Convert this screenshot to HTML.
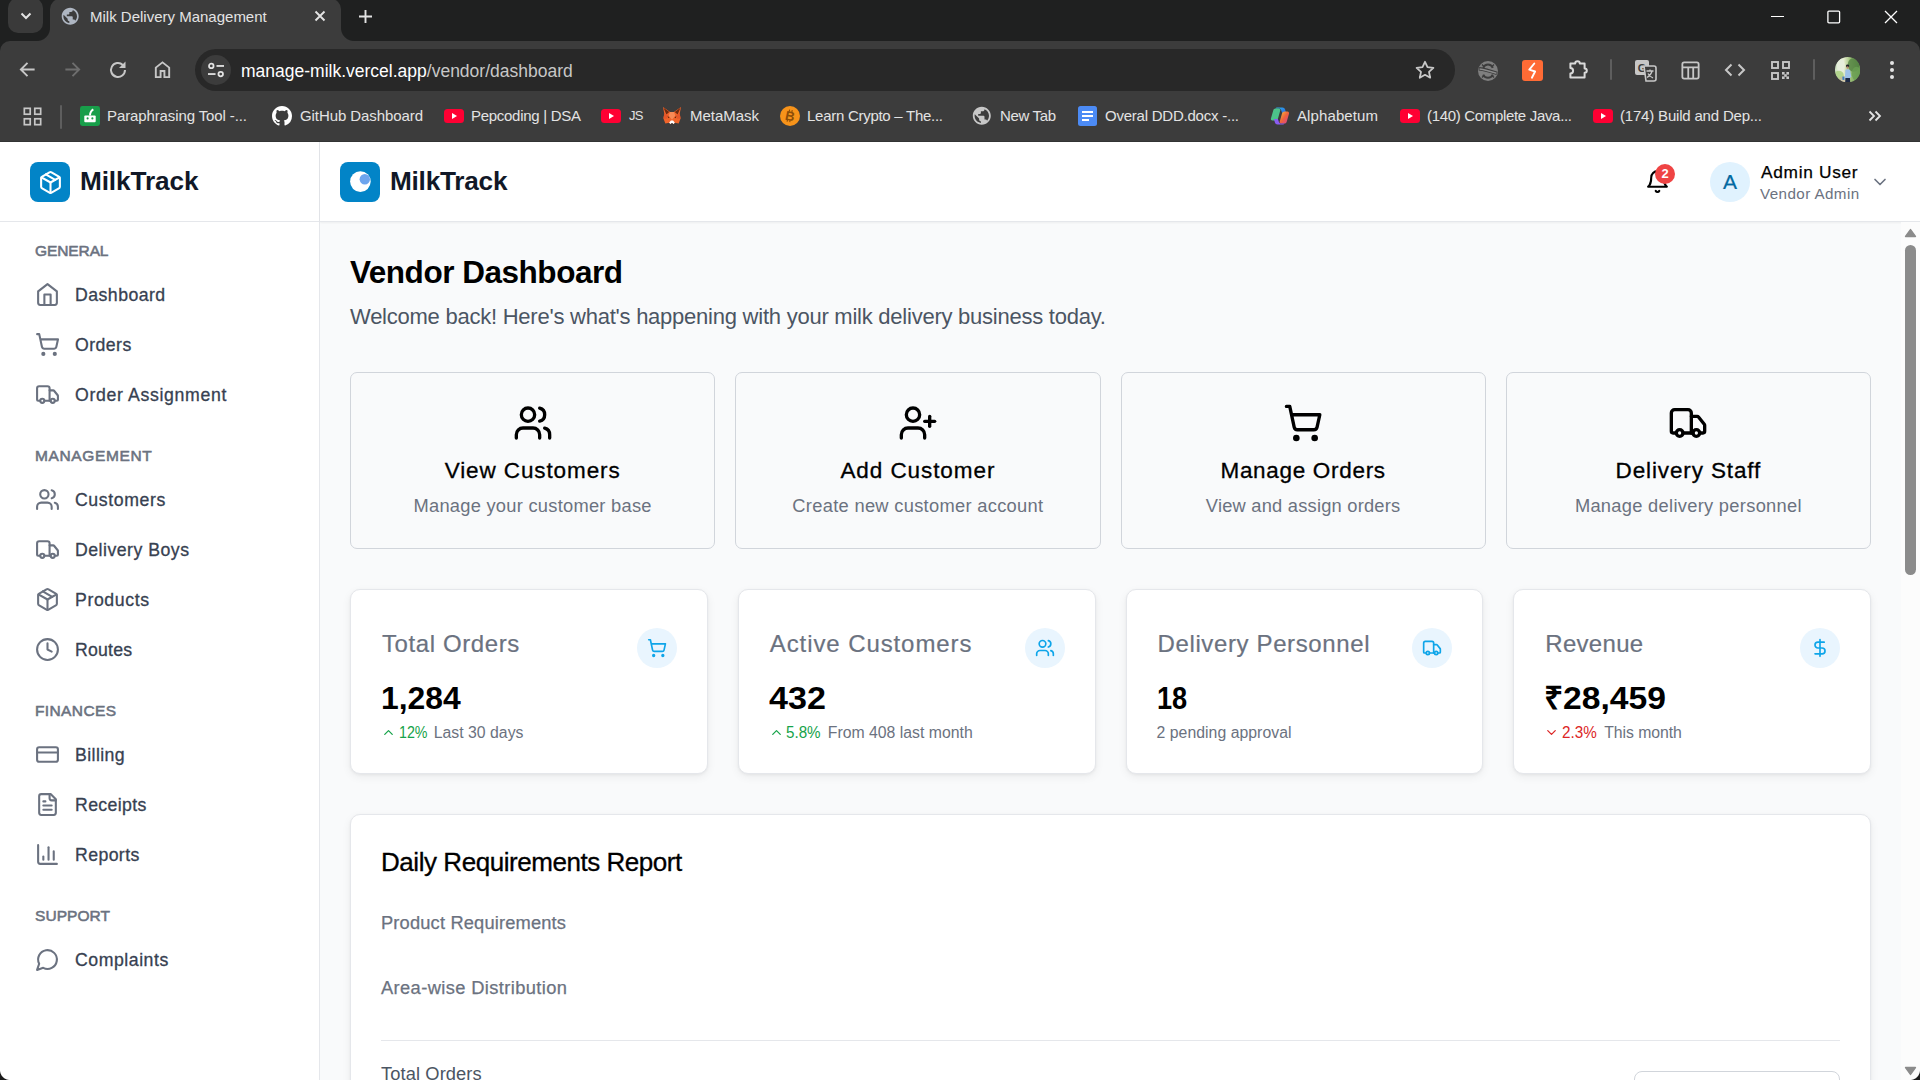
<!DOCTYPE html>
<html lang="en">
<head>
<meta charset="utf-8">
<title>Milk Delivery Management</title>
<style>
*{box-sizing:border-box;margin:0;padding:0}
html,body{width:1920px;height:1080px;overflow:hidden}
body{position:relative;background:#f9fafb;font-family:"Liberation Sans",sans-serif;color:#000}
svg{display:block}
.abs{position:absolute}
/* ---------- browser chrome ---------- */
#chrome{position:absolute;left:0;top:0;width:1920px;height:142px;background:#1f2020;color:#e3e3e3;font-size:15px}
#tabstrip{position:absolute;left:0;top:0;width:1920px;height:41px;background:#1f2020}
#tabsearch{position:absolute;left:8px;top:-2px;width:35px;height:35px;border-radius:10px;background:#3a3a3a}
#tab{position:absolute;left:50px;top:-1px;width:291px;height:42px;background:#3c3c3c;border-radius:10px 10px 0 0}
#tab:before,#tab:after{content:"";position:absolute;bottom:0;width:13px;height:13px;background:radial-gradient(circle at 0 0,transparent 12.5px,#3c3c3c 13.5px)}
#tab:before{left:-13px}
#tab:after{right:-13px;background:radial-gradient(circle at 100% 0,transparent 12.5px,#3c3c3c 13.5px)}
.ct{position:absolute;white-space:nowrap;line-height:20px;height:20px}
#toolbar{position:absolute;left:0;top:41px;width:1920px;height:55px;background:#3c3c3c;border-radius:10px 10px 0 0}
#omni{position:absolute;left:195px;top:8px;width:1260px;height:42px;border-radius:21px;background:#282828}
#siteinfo{position:absolute;left:6px;top:6px;width:30px;height:30px;border-radius:15px;background:#3c3c3c}
#bm{position:absolute;left:0;top:96px;width:1920px;height:46px;background:#3c3c3c;border-bottom:1px solid #323333}
.bmt{position:absolute;top:10px;line-height:20px;height:20px;white-space:nowrap;color:#e3e3e3;font-size:15px}
.ico{position:absolute}
/* ---------- app ---------- */
#app{position:absolute;left:0;top:142px;width:1920px;height:938px;background:#f9fafb;overflow:hidden}
#sidebar{position:absolute;left:0;top:0;width:320px;height:938px;background:#fff;border-right:1px solid #e5e7eb}
#sbhead{position:absolute;left:0;top:0;width:319px;height:80px;border-bottom:1px solid #e5e7eb}
.logo{position:absolute;width:40px;height:40px;border-radius:8px;background:#0284c7}
.brand{position:absolute;font-weight:700;font-size:26.200px;line-height:35px;color:#111827;white-space:nowrap}
.grp{position:absolute;left:35px;margin-top:-1px;font-size:15.500px;line-height:20px;font-weight:400;color:#6b7280;-webkit-text-stroke:.55px #6b7280;white-space:nowrap}
.nav{position:absolute;left:20px;width:280px;height:45px;color:#374151;font-size:17.700px;line-height:25px}
.nav svg{position:absolute;left:15px;top:10px;width:25px;height:25px;stroke:#6b7280;fill:none;stroke-width:2;stroke-linecap:round;stroke-linejoin:round}
.nav span{position:absolute;left:55px;top:11px;white-space:nowrap;-webkit-text-stroke:.3px #374151}
#header{position:absolute;left:320px;top:0;width:1600px;height:80px;background:#fff;border-bottom:1px solid #e5e7eb;box-shadow:0 1px 2px rgba(0,0,0,.05)}
#main{position:absolute;left:320px;top:80px;width:1581px;height:858px}
h1{position:absolute;left:30px;top:30px;font-size:31.500px;line-height:40px;font-weight:700;color:#000;white-space:nowrap}
.sub{position:absolute;left:30px;top:80px;font-size:22px;line-height:30px;color:#4b5563;white-space:nowrap}
.qa{position:absolute;top:150px;width:365.250px;height:177px;border:1px solid #d1d5db;border-radius:7px;text-align:center}
.qa svg{position:absolute;left:50%;margin-left:-20px;top:30px;width:40px;height:40px;stroke:#000;fill:none;stroke-width:2;stroke-linecap:round;stroke-linejoin:round}
.qa b{position:absolute;left:0;right:0;top:80px;font-weight:400;font-size:22.500px;line-height:35px;color:#000;-webkit-text-stroke:.3px #000}
.qa p{position:absolute;left:0;right:0;top:120px;font-size:18.300px;line-height:25px;color:#6b7280}
.st{position:absolute;top:367px;width:357.750px;height:185px;background:#fff;border:1px solid #e5e7eb;border-radius:10px;box-shadow:0 3px 10px rgba(0,0,0,.06),0 1px 3px rgba(0,0,0,.05)}
.st .tt{position:absolute;left:31px;top:36px;font-size:24px;line-height:35px;color:#6b7280;white-space:nowrap;-webkit-text-stroke:.2px #6b7280}
.st .ci{position:absolute;right:30px;top:38px;width:40px;height:40px;border-radius:20px;background:#e9f5fe}
.st .ci svg{position:absolute;left:10px;top:10px;width:20px;height:20px;stroke:#0ea5e9;fill:none;stroke-width:2;stroke-linecap:round;stroke-linejoin:round}
.st .v{position:absolute;left:30px;top:88px;font-size:32px;line-height:40px;font-weight:700;color:#000;white-space:nowrap}
.st .d{position:absolute;left:30px;top:133px;height:20px;font-size:15.800px;line-height:20px;color:#6b7280;white-space:nowrap}
.st .d span{position:absolute;top:0;white-space:nowrap}
.st .d .ch{position:absolute;left:0;top:2px;width:15px;height:15px;fill:none;stroke-width:2;stroke-linecap:round;stroke-linejoin:round}
.up{color:#16a34a}.dn{color:#dc2626}
#rep{position:absolute;left:30px;top:592px;width:1521px;height:400px;background:#fff;border:1px solid #e5e7eb;border-radius:10px;box-shadow:0 3px 10px rgba(0,0,0,.06),0 1px 3px rgba(0,0,0,.05)}

.badge{position:absolute;left:1335px;top:22px;width:20px;height:20px;border-radius:10px;background:#ef4444;color:#fff;font-size:13px;font-weight:700;line-height:20px;text-align:center}
.avatar{position:absolute;left:1390px;top:20px;width:40px;height:40px;border-radius:20px;background:#e0f2fe;color:#0369a1;font-size:21px;line-height:40px;text-align:center;-webkit-text-stroke:.2px #0369a1}
.uname{position:absolute;left:1441px;top:18px;font-size:17.300px;line-height:25px;color:#000;white-space:nowrap;-webkit-text-stroke:.25px #000}
.urole{position:absolute;left:1440px;top:42px;font-size:15.200px;line-height:20px;color:#6b7280;white-space:nowrap}
.rt{position:absolute;left:30px;top:30px;font-size:26px;line-height:35px;color:#000;white-space:nowrap;-webkit-text-stroke:.3px #000}
.rs{position:absolute;left:30px;font-size:18.300px;line-height:25px;color:#6b7280;white-space:nowrap;-webkit-text-stroke:.25px #6b7280}
.rl{position:absolute;left:30px;top:225px;width:1459px;height:1px;background:#e5e7eb}
.rto{position:absolute;left:30px;top:246px;font-size:18.300px;line-height:25px;color:#4b5563;white-space:nowrap}
.rbtn{position:absolute;left:1283px;top:256px;width:206px;height:45px;border:1px solid #d1d5db;border-radius:8px;background:#fff}
#sbar{position:absolute;left:1901px;top:80px;width:19px;height:858px;background:#fcfcfc}
#thumb{position:absolute;left:4px;top:23px;width:11px;height:330px;border-radius:6px;background:#8b8b8b}
.corner{position:absolute;width:10px;height:10px}
</style>
</head>
<body>
<div id="chrome">
  <div id="tabstrip">
    <div id="tabsearch"><svg class="ico" style="left:11.500px;top:14px" width="12" height="8" viewBox="0 0 12 8"><path d="M1.5 1.5 6 6l4.5-4.5" fill="none" stroke="#e3e3e3" stroke-width="2"/></svg></div>
    <div id="tab">
      <svg class="ico" style="left:10px;top:6.800px" width="20.400" height="20.400" viewBox="0 0 24 24"><path d="M12 2C6.480 2 2 6.480 2 12s4.480 10 10 10 10-4.480 10-10S17.520 2 12 2zm-1 17.930c-3.950-.490-7-3.850-7-7.930 0-.620.080-1.210.210-1.790L9 15v1c0 1.100.900 2 2 2v1.930zm6.900-2.540c-.260-.810-1-1.390-1.900-1.390h-1v-3c0-.550-.450-1-1-1H8v-2h2c.550 0 1-.450 1-1V7h2c1.100 0 2-.900 2-2v-.410c2.930 1.190 5 4.060 5 7.410 0 2.080-.800 3.970-2.100 5.390z" fill="#aeb6c2"/></svg>
      <span class="ct" style="left:40px;top:8px;color:#e3e3e3">Milk Delivery Management</span>
      <svg class="ico" style="left:264px;top:11px" width="12" height="12" viewBox="0 0 12 12"><path d="M1.500 1.500l9 9m0-9l-9 9" stroke="#e3e3e3" stroke-width="1.900" fill="none"/></svg>
    </div>
    <svg class="ico" style="left:358px;top:8.500px" width="15" height="15" viewBox="0 0 15 15"><path d="M7.500 1v13M1 7.500h13" stroke="#e3e3e3" stroke-width="1.900" fill="none"/></svg>
    <div class="abs" style="left:1771px;top:16px;width:13px;height:1px;background:#fff"></div>
    <svg class="ico" style="left:1826px;top:9px" width="16" height="16" viewBox="0 0 16 16"><rect x="1.900" y="2.100" width="11.700" height="11.700" rx="1" fill="none" stroke="#fff" stroke-width="1.300"/></svg>
    <svg class="ico" style="left:1883px;top:9px" width="16" height="16" viewBox="0 0 16 16"><path d="M2 2l12 12m0-12l-12 12" stroke="#fff" stroke-width="1.300" fill="none"/></svg>
  </div>
  <div id="toolbar">
    <!-- back -->
    <svg class="ico" style="left:18px;top:19px" width="19" height="19" viewBox="0 0 20 20"><path d="M17.500 10H3.500M10 3l-7 7 7 7" fill="none" stroke="#c7c7c7" stroke-width="2"/></svg>
    <!-- forward -->
    <svg class="ico" style="left:63px;top:19px" width="19" height="19" viewBox="0 0 20 20"><path d="M2.500 10h14M10 3l7 7-7 7" fill="none" stroke="#6e6e6e" stroke-width="2"/></svg>
    <!-- reload -->
    <svg class="ico" style="left:107px;top:18px" width="22" height="22" viewBox="0 0 22 22"><path d="M18 11a7 7 0 1 1-2.200-5.100" fill="none" stroke="#c7c7c7" stroke-width="2"/><path d="M18.500 2.500v6.500h-6.500z" fill="#c7c7c7"/></svg>
    <!-- home -->
    <svg class="ico" style="left:152px;top:18px" width="21" height="21" viewBox="0 0 22 22"><path d="M4 19V9l7-5.500L18 9v10h-5v-6.500H9V19z" fill="none" stroke="#c7c7c7" stroke-width="2"/></svg>
    <div id="omni">
      <div id="siteinfo"><svg class="ico" style="left:6px;top:7px" width="18" height="16" viewBox="0 0 19 17"><g fill="none" stroke="#e3e3e3" stroke-width="1.900"><circle cx="4.500" cy="4.200" r="2.400"/><path d="M10 4.200h8"/><circle cx="14.500" cy="12.800" r="2.400"/><path d="M1 12.800h8"/></g></svg></div>
      <span class="ct" style="left:46px;top:11px;font-size:17.500px;line-height:22px;color:#fff" id="url"><span>manage-milk.vercel.app</span><span style="color:#c7c7c7">/vendor/dashboard</span></span>
      <svg class="ico" style="left:1219px;top:10px" width="22" height="22" viewBox="0 0 22 22"><path d="M11 2.800l2.500 5.400 5.900.7-4.400 4 1.200 5.800L11 15.800l-5.200 2.900L7 12.900l-4.400-4 5.900-.7z" fill="none" stroke="#c7c7c7" stroke-width="1.800" stroke-linejoin="round"/></svg>
    </div>
    <svg class="ico" style="left:1476.500px;top:18.500px" width="22" height="22" viewBox="0 0 22 22"><circle cx="11" cy="11" r="10" fill="#7f7f7f"/><path d="M6.200 7.800a5.200 5.200 0 0 1 9.600 0M6.200 14.600a5.200 5.200 0 0 0 9.600 0" fill="none" stroke="#3c3c3c" stroke-width="2"/><path d="M5 4.500l2 2M17 4.500l-2 2M5 17.500l2-2M17 17.500l-2-2" stroke="#3c3c3c" stroke-width="1.300"/><path d="M2 8.800c5 .6 12 2.600 18 4.600" fill="none" stroke="#3c3c3c" stroke-width="3.600"/><path d="M2.500 8.900c5 .6 11.500 2.500 17 4.300" fill="none" stroke="#8a8a8a" stroke-width="1.500"/></svg>
    <svg class="ico" style="left:1522px;top:19px" width="21" height="21" viewBox="0 0 21 21"><rect width="21" height="21" rx="3" fill="#ff6b35"/><path d="M12.300 3.500l-5 6.200 5.800 1.800-3.200 6.200" fill="none" stroke="#fff" stroke-width="1.900" stroke-linejoin="round" stroke-linecap="round"/></svg>
    <svg class="ico" style="left:1567px;top:17px" width="22" height="22" viewBox="0 0 22 22"><path d="M3.400 5.500H8.200A2.300 2.300 0 0 1 12.800 5.500H17.600V10.400A2.200 2.200 0 0 1 17.600 14.800V19.400H3.400V15.400A2.700 2.700 0 0 0 3.400 10Z" fill="none" stroke="#dadada" stroke-width="2" stroke-linejoin="round"/></svg>
    <div class="abs" style="left:1610px;top:18px;width:2px;height:21px;background:#5e5e5e;border-radius:1px"></div>
    <svg class="ico" style="left:1634px;top:18px" width="23" height="23" viewBox="0 0 23 23"><rect x="1" y="1" width="14" height="15" rx="2" fill="#c7c7c7"/><text x="8" y="12.500" font-family="Liberation Sans,sans-serif" font-size="11" font-weight="700" fill="#3c3c3c" text-anchor="middle">G</text><path d="M10 7h10a2 2 0 0 1 2 2v11a2 2 0 0 1-2 2h-8z" fill="#3c3c3c" stroke="#c7c7c7" stroke-width="1.600"/><path d="M12.500 12h7M16 10.500v1.500M18 12c-.5 2.500-2.500 5-5 6.500M14 14.500c1 2 3 3.500 5 4.500" fill="none" stroke="#c7c7c7" stroke-width="1.300"/></svg>
    <svg class="ico" style="left:1681px;top:20px" width="19" height="19" viewBox="0 0 21 21"><rect x="1.500" y="1.500" width="18" height="18" rx="2" fill="none" stroke="#c7c7c7" stroke-width="2"/><path d="M1.500 7h18M8 7v12.500M13.500 7v12.500" fill="none" stroke="#c7c7c7" stroke-width="2"/></svg>
    <svg class="ico" style="left:1724px;top:22px" width="22" height="14" viewBox="0 0 22 14"><path d="M7.500 1.500L2 7l5.500 5.500M14.500 1.500L20 7l-5.500 5.500" fill="none" stroke="#c7c7c7" stroke-width="2"/></svg>
    <svg class="ico" style="left:1771px;top:20px" width="19" height="19" viewBox="0 0 19 19"><g fill="none" stroke="#c7c7c7" stroke-width="1.900"><rect x="1" y="1" width="6" height="6"/><rect x="12" y="1" width="6" height="6"/><rect x="1" y="12" width="6" height="6"/></g><g fill="#c7c7c7"><rect x="11" y="11" width="2.600" height="2.600"/><rect x="15.400" y="11" width="2.600" height="2.600"/><rect x="13.200" y="13.200" width="2.600" height="2.600"/><rect x="11" y="15.400" width="2.600" height="2.600"/><rect x="15.400" y="15.400" width="2.600" height="2.600"/></g></svg>
    <div class="abs" style="left:1813px;top:18px;width:2px;height:21px;background:#5e5e5e;border-radius:1px"></div>
    <svg class="ico" style="left:1835px;top:16px" width="25.400" height="25.400" viewBox="0 0 26 26"><defs><clipPath id="avc"><circle cx="13" cy="13" r="13"/></clipPath><linearGradient id="avg" x1="0" y1="0" x2="1" y2="0"><stop offset="0" stop-color="#cfe3c4"/><stop offset=".35" stop-color="#e6edcf"/><stop offset=".6" stop-color="#9fc17a"/><stop offset="1" stop-color="#5f8f4a"/></linearGradient></defs><g clip-path="url(#avc)"><rect width="26" height="26" fill="url(#avg)"/><ellipse cx="19" cy="8" rx="6" ry="7" fill="#4f7f3f" opacity=".75"/><ellipse cx="22" cy="17" rx="5" ry="7" fill="#6aa052" opacity=".8"/><ellipse cx="6" cy="9" rx="4" ry="8" fill="#e9efe0" opacity=".8"/><ellipse cx="4" cy="19" rx="5" ry="5" fill="#a9cf7e" opacity=".8"/><ellipse cx="9" cy="23" rx="5" ry="3" fill="#c9b89a" opacity=".7"/><rect x="7.600" y="20" width="2" height="3.500" fill="#3f7fc2"/><ellipse cx="12.900" cy="9.300" rx="1.700" ry="1.500" fill="#23232b"/><ellipse cx="12.900" cy="10.700" rx="1.100" ry="1.300" fill="#b98a6a"/><path d="M10.600 13.200q2.300-1.400 4.800 0l1.300 7.300-1.200.6-.2 1.400h-5.200z" fill="#9dc1ea"/><path d="M10.700 21.600h4.600l.3 4.400h-5.200z" fill="#1d2a45"/></g></svg>
    <svg class="ico" style="left:1889px;top:17px" width="6" height="24" viewBox="0 0 6 24"><g fill="#e3e3e3"><circle cx="3" cy="5" r="2"/><circle cx="3" cy="12" r="2"/><circle cx="3" cy="19" r="2"/></g></svg>
  </div>
  <div id="bm">
    <svg class="ico" style="left:22.500px;top:11px" width="19" height="19" viewBox="0 0 20 20"><g fill="none" stroke="#c7c7c7" stroke-width="1.800"><rect x="1.400" y="1.400" width="6.200" height="6.200"/><rect x="12.400" y="1.400" width="6.200" height="6.200"/><rect x="1.400" y="12.400" width="6.200" height="6.200"/><rect x="12.400" y="12.400" width="6.200" height="6.200"/></g></svg>
    <div class="abs" style="left:60px;top:9px;width:2px;height:24px;background:#5e5e5e;border-radius:1px"></div>
    <svg class="ico" style="left:80px;top:10px" width="20" height="20" viewBox="0 0 21 21"><rect width="21" height="21" rx="2.500" fill="#189e4a"/><rect x="4.500" y="10" width="12" height="7" rx="1" fill="#fff"/><circle cx="8" cy="13" r="1.100" fill="#189e4a"/><circle cx="13" cy="13" r="1.100" fill="#189e4a"/><path d="M10.500 10c0-3 1-5 3.500-6.500" fill="none" stroke="#fff" stroke-width="2"/></svg>
    <span class="bmt" style="letter-spacing:-0.11px;left:107px">Paraphrasing Tool -...</span>
    <svg class="ico" style="left:272px;top:10px" width="20" height="20" viewBox="0 0 16 16"><path fill="#fff" d="M8 0C3.580 0 0 3.580 0 8c0 3.540 2.290 6.530 5.470 7.590.4.070.55-.17.55-.38 0-.19-.01-.82-.01-1.490-2.010.37-2.530-.49-2.690-.94-.09-.23-.48-.94-.82-1.130-.28-.15-.68-.52-.01-.53.630-.01 1.080.58 1.230.82.720 1.210 1.870.87 2.330.66.070-.52.280-.87.510-1.070-1.780-.2-3.640-.89-3.640-3.950 0-.87.310-1.590.82-2.150-.08-.2-.36-1.020.08-2.120 0 0 .67-.21 2.200.82.640-.18 1.320-.27 2-.27s1.360.09 2 .27c1.530-1.040 2.200-.82 2.200-.82.440 1.100.16 1.920.08 2.120.51.560.82 1.270.82 2.150 0 3.070-1.870 3.750-3.650 3.950.290.25.540.73.540 1.480 0 1.070-.01 1.930-.01 2.200 0 .21.150.46.55.38A8.010 8.010 0 0 0 16 8c0-4.420-3.580-8-8-8z"/></svg>
    <span class="bmt" style="letter-spacing:-0.082px;left:300px">GitHub Dashboard</span>
    <svg class="ico" style="left:444px;top:13px" width="20" height="14" viewBox="0 0 20 14"><rect width="20" height="14" rx="3.500" fill="#ff0033"/><path d="M8 4l5 3-5 3z" fill="#fff"/></svg>
    <span class="bmt" style="letter-spacing:-0.283px;left:471px">Pepcoding | DSA</span>
    <svg class="ico" style="left:601px;top:13px" width="20" height="14" viewBox="0 0 20 14"><rect width="20" height="14" rx="3.500" fill="#ff0033"/><path d="M8 4l5 3-5 3z" fill="#fff"/></svg>
    <span class="bmt" style="left:629px;font-size:13px;letter-spacing:-.8px">JS</span>
    <svg class="ico" style="left:662px;top:10px" width="20" height="20" viewBox="0 0 21 20"><path d="M1 .500l7.500 5.300h4L20 .500l-1.400 6.800.9 5.200-2 5.500-4-1-1.500 1.500h-3L7.500 17l-4 1-2-5.500.9-5.200z" fill="#f0642a"/><path d="M1.600 1.300l6 4.600-3 2.600zM19.400 1.300l-6 4.600 3 2.600z" fill="#6e2a10"/><path d="M8.500 5.800h4l1.500 4-3.500 4.200-3.500-4.200z" fill="#f78a56"/><path d="M2.400 7.300l4.600 2.500L5 13l-3.500-.5zM18.600 7.300L14 9.800l2 3.200 3.500-.5z" fill="#e4572a"/><path d="M5.800 10.600l2 .5-.6 1.200zM15.200 10.600l-2 .5.600 1.200z" fill="#3a1a0c"/><path d="M7.500 17l1.800-2.200h2.400l1.800 2.200-1.500 1.500H9z" fill="#fff"/><path d="M9.300 17.600h2.400l-.3 1H9.600z" fill="#3a2a22"/></svg>
    <span class="bmt" style="letter-spacing:-0.027px;left:690px">MetaMask</span>
    <svg class="ico" style="left:780px;top:10px" width="20" height="20" viewBox="0 0 20 20"><circle cx="10" cy="10" r="10" fill="#f7931a"/><text x="10" y="14.500" font-family="Liberation Sans,sans-serif" font-size="13" font-weight="700" fill="#8a4d08" text-anchor="middle" transform="rotate(12 10 10)">B</text><path d="M8.300 3.800v2M11 3.800v2M8.300 14v2M11 14v2" stroke="#8a4d08" stroke-width="1.100" transform="rotate(12 10 10)"/></svg>
    <span class="bmt" style="letter-spacing:-0.273px;left:807px">Learn Crypto – The...</span>
    <svg class="ico" style="left:971.200px;top:9.200px" width="21.600" height="21.600" viewBox="0 0 24 24"><path d="M12 2C6.480 2 2 6.480 2 12s4.480 10 10 10 10-4.480 10-10S17.520 2 12 2zm-1 17.930c-3.950-.490-7-3.850-7-7.930 0-.620.080-1.210.210-1.790L9 15v1c0 1.100.900 2 2 2v1.930zm6.900-2.540c-.260-.810-1-1.390-1.900-1.390h-1v-3c0-.550-.450-1-1-1H8v-2h2c.550 0 1-.450 1-1V7h2c1.100 0 2-.900 2-2v-.410c2.930 1.190 5 4.060 5 7.410 0 2.080-.800 3.970-2.100 5.390z" fill="#c7c7c7"/></svg>
    <span class="bmt" style="letter-spacing:-0.349px;left:1000px">New Tab</span>
    <svg class="ico" style="left:1078px;top:10px" width="19" height="20" viewBox="0 0 19 20"><rect width="19" height="20" rx="2.500" fill="#4c8bf5"/><path d="M4 6h11M4 10h11M4 14h7" stroke="#fff" stroke-width="2"/></svg>
    <span class="bmt" style="letter-spacing:-0.23px;left:1105px">Overal DDD.docx -...</span>
    <svg class="ico" style="left:1270px;top:10px" width="20" height="20" viewBox="0 0 20 20"><defs><linearGradient id="cg1" x1="0" y1="0" x2="1" y2="1"><stop offset="0" stop-color="#2bb4f0"/><stop offset="1" stop-color="#2a64e0"/></linearGradient><linearGradient id="cg2" x1="0" y1="0" x2="1" y2="1"><stop offset="0" stop-color="#f7c33c"/><stop offset=".5" stop-color="#f0623c"/><stop offset="1" stop-color="#d43da0"/></linearGradient></defs><path d="M7 1.500h5.500c1.300 0 2.200.8 2.600 2l1 3.500h-4l-1-3c-.3-.9-1-1.500-2-1.500H5.500c.3-.6.8-1 1.500-1z" fill="url(#cg1)"/><path d="M5.500 2.500h3c1 0 1.600.5 1.900 1.500L8 12.500c-.4 1.300-1.400 2-2.700 2H2.500C1.300 14.500.6 13.500 1 12.200L3.300 4.300c.3-1.100 1.100-1.800 2.200-1.800z" fill="#4cc38a"/><path d="M14.500 17.500h-3c-1 0-1.600-.5-1.900-1.500L12 7.500c.4-1.300 1.400-2 2.700-2h2.800c1.200 0 1.900 1 1.500 2.300l-2.300 7.900c-.3 1.100-1.100 1.800-2.200 1.800z" fill="url(#cg2)"/><path d="M13 18.500H7.500c-1.300 0-2.200-.8-2.600-2l-1-3.500h4l1 3c.3.900 1 1.500 2 1.500h3.600c-.3.600-.8 1-1.500 1z" fill="#8a5cf0"/></svg>
    <span class="bmt" style="letter-spacing:0.104px;left:1297px">Alphabetum</span>
    <svg class="ico" style="left:1400px;top:13px" width="20" height="14" viewBox="0 0 20 14"><rect width="20" height="14" rx="3.500" fill="#ff0033"/><path d="M8 4l5 3-5 3z" fill="#fff"/></svg>
    <span class="bmt" style="letter-spacing:-0.321px;left:1427px">(140) Complete Java...</span>
    <svg class="ico" style="left:1593px;top:13px" width="20" height="14" viewBox="0 0 20 14"><rect width="20" height="14" rx="3.500" fill="#ff0033"/><path d="M8 4l5 3-5 3z" fill="#fff"/></svg>
    <span class="bmt" style="letter-spacing:-0.187px;left:1620px">(174) Build and Dep...</span>
    <svg class="ico" style="left:1868px;top:14px" width="14" height="12" viewBox="0 0 14 12"><path d="M1.500 1.500L6 6l-4.500 4.500M7.500 1.500L12 6l-4.500 4.500" fill="none" stroke="#e3e3e3" stroke-width="1.800"/></svg>
  </div>
</div>
<div id="app">
  <div id="sidebar">
    <div id="sbhead"><div class="logo" style="left:30px;top:20px"><svg viewBox="0 0 24 24" style="position:absolute;left:7.500px;top:7.500px;width:25px;height:25px;stroke:#fff;fill:none;stroke-width:2;stroke-linecap:round;stroke-linejoin:round"><path d="m7.500 4.270 9 5.150"/><path d="M21 8a2 2 0 0 0-1-1.730l-7-4a2 2 0 0 0-2 0l-7 4A2 2 0 0 0 3 8v8a2 2 0 0 0 1 1.730l7 4a2 2 0 0 0 2 0l7-4A2 2 0 0 0 21 16Z"/><path d="m3.300 7 8.700 5 8.700-5"/><path d="M12 22V12"/></svg></div><div class="brand" style="letter-spacing:-0.109px;left:80px;top:22px">MilkTrack</div></div>
    <div class="grp" style="letter-spacing:-0.099px;top:99.5px">GENERAL</div>
    <div class="nav" style="top:130px"><svg viewBox="0 0 24 24"><path d="m3 9 9-7 9 7v11a2 2 0 0 1-2 2H5a2 2 0 0 1-2-2z"/><polyline points="9 22 9 12 15 12 15 22"/></svg><span style="letter-spacing:0.459px">Dashboard</span></div>
    <div class="nav" style="top:180px"><svg viewBox="0 0 24 24"><circle cx="8" cy="21" r="1"/><circle cx="19" cy="21" r="1"/><path d="M2.050 2.050h2l2.660 12.420a2 2 0 0 0 2 1.580h9.780a2 2 0 0 0 1.950-1.570l1.650-7.430H5.120"/></svg><span style="letter-spacing:0.447px">Orders</span></div>
    <div class="nav" style="top:230px"><svg viewBox="0 0 24 24"><path d="M14 18V6a2 2 0 0 0-2-2H4a2 2 0 0 0-2 2v11a1 1 0 0 0 1 1h2"/><path d="M15 18H9"/><path d="M19 18h2a1 1 0 0 0 1-1v-3.650a1 1 0 0 0-.220-.624l-3.480-4.350A1 1 0 0 0 17.520 8H14"/><circle cx="17" cy="18" r="2"/><circle cx="7" cy="18" r="2"/></svg><span style="letter-spacing:0.649px">Order Assignment</span></div>
    <div class="grp" style="letter-spacing:0.623px;top:304.5px">MANAGEMENT</div>
    <div class="nav" style="top:335px"><svg viewBox="0 0 24 24"><path d="M16 21v-2a4 4 0 0 0-4-4H6a4 4 0 0 0-4 4v2"/><circle cx="9" cy="7" r="4"/><path d="M22 21v-2a4 4 0 0 0-3-3.870"/><path d="M16 3.130a4 4 0 0 1 0 7.750"/></svg><span style="letter-spacing:0.598px">Customers</span></div>
    <div class="nav" style="top:385px"><svg viewBox="0 0 24 24"><path d="M14 18V6a2 2 0 0 0-2-2H4a2 2 0 0 0-2 2v11a1 1 0 0 0 1 1h2"/><path d="M15 18H9"/><path d="M19 18h2a1 1 0 0 0 1-1v-3.650a1 1 0 0 0-.220-.624l-3.480-4.350A1 1 0 0 0 17.520 8H14"/><circle cx="17" cy="18" r="2"/><circle cx="7" cy="18" r="2"/></svg><span style="letter-spacing:0.49px">Delivery Boys</span></div>
    <div class="nav" style="top:435px"><svg viewBox="0 0 24 24"><path d="m7.500 4.270 9 5.150"/><path d="M21 8a2 2 0 0 0-1-1.730l-7-4a2 2 0 0 0-2 0l-7 4A2 2 0 0 0 3 8v8a2 2 0 0 0 1 1.730l7 4a2 2 0 0 0 2 0l7-4A2 2 0 0 0 21 16Z"/><path d="m3.300 7 8.700 5 8.700-5"/><path d="M12 22V12"/></svg><span style="letter-spacing:0.598px">Products</span></div>
    <div class="nav" style="top:485px"><svg viewBox="0 0 24 24"><circle cx="12" cy="12" r="10"/><polyline points="12 6 12 12 16 14"/></svg><span style="letter-spacing:0.191px">Routes</span></div>
    <div class="grp" style="letter-spacing:0.375px;top:559.5px">FINANCES</div>
    <div class="nav" style="top:590px"><svg viewBox="0 0 24 24"><rect width="20" height="14" x="2" y="5" rx="2"/><line x1="2" x2="22" y1="10" y2="10"/></svg><span style="letter-spacing:0.416px">Billing</span></div>
    <div class="nav" style="top:640px"><svg viewBox="0 0 24 24"><path d="M15 2H6a2 2 0 0 0-2 2v16a2 2 0 0 0 2 2h12a2 2 0 0 0 2-2V7Z"/><path d="M14 2v4a2 2 0 0 0 2 2h4"/><path d="M10 9H8"/><path d="M16 13H8"/><path d="M16 17H8"/></svg><span style="letter-spacing:0.353px">Receipts</span></div>
    <div class="nav" style="top:690px"><svg viewBox="0 0 24 24"><path d="M3 3v16a2 2 0 0 0 2 2h16"/><path d="M18 17V9"/><path d="M13 17V5"/><path d="M8 17v-3"/></svg><span style="letter-spacing:0.394px">Reports</span></div>
    <div class="grp" style="letter-spacing:0.057px;top:764.5px">SUPPORT</div>
    <div class="nav" style="top:795px"><svg viewBox="0 0 24 24"><path d="M7.900 20A9 9 0 1 0 4 16.100L2 22Z"/></svg><span style="letter-spacing:0.535px">Complaints</span></div>
  </div>
  <div id="header">
    <div class="logo" style="left:20px;top:20px"><svg viewBox="0 0 40 40" style="position:absolute;left:0;top:0;width:40px;height:40px"><circle cx="20.400" cy="19.600" r="10.300" fill="#fff"/><circle cx="24.800" cy="17.200" r="5.200" fill="#6ea5ee"/></svg></div>
    <div class="brand" style="letter-spacing:-0.234px;left:70px;top:22px">MilkTrack</div>
    <svg viewBox="0 0 24 24" style="position:absolute;left:1325px;top:27px;width:25px;height:25px;stroke:#000;fill:none;stroke-width:2;stroke-linecap:round;stroke-linejoin:round"><path d="M6 8a6 6 0 0 1 12 0c0 7 3 9 3 9H3s3-2 3-9"/><path d="M10.300 21a1.940 1.940 0 0 0 3.400 0"/></svg>
    <div class="badge">2</div>
    <div class="avatar">A</div>
    <div class="uname" style="letter-spacing:0.702px">Admin User</div>
    <div class="urole" style="letter-spacing:0.42px">Vendor Admin</div>
    <svg viewBox="0 0 24 24" style="position:absolute;left:1550px;top:30px;width:20px;height:20px;stroke:#6b7280;fill:none;stroke-width:2;stroke-linecap:round;stroke-linejoin:round"><path d="m6 9 6 6 6-6"/></svg>
  </div>
  <div id="main">
    <h1 style="letter-spacing:-0.471px">Vendor Dashboard</h1>
    <p class="sub" style="letter-spacing:-0.241px">Welcome back! Here's what's happening with your milk delivery business today.</p>
    <div class="qa" style="left:30.0px"><svg viewBox="0 0 24 24"><path d="M16 21v-2a4 4 0 0 0-4-4H6a4 4 0 0 0-4 4v2"/><circle cx="9" cy="7" r="4"/><path d="M22 21v-2a4 4 0 0 0-3-3.870"/><path d="M16 3.130a4 4 0 0 1 0 7.750"/></svg><b><span style="letter-spacing:0.893px">View Customers</span></b><p><span style="letter-spacing:0.263px">Manage your customer base</span></p></div>
    <div class="qa" style="left:415.25px"><svg viewBox="0 0 24 24"><path d="M16 21v-2a4 4 0 0 0-4-4H6a4 4 0 0 0-4 4v2"/><circle cx="9" cy="7" r="4"/><line x1="19" x2="19" y1="8" y2="14"/><line x1="22" x2="16" y1="11" y2="11"/></svg><b><span style="letter-spacing:0.926px">Add Customer</span></b><p><span style="letter-spacing:0.302px">Create new customer account</span></p></div>
    <div class="qa" style="left:800.5px"><svg viewBox="0 0 24 24"><circle cx="8" cy="21" r="1"/><circle cx="19" cy="21" r="1"/><path d="M2.050 2.050h2l2.660 12.420a2 2 0 0 0 2 1.580h9.780a2 2 0 0 0 1.950-1.570l1.650-7.430H5.120"/></svg><b><span style="letter-spacing:0.689px">Manage Orders</span></b><p><span style="letter-spacing:0.224px">View and assign orders</span></p></div>
    <div class="qa" style="left:1185.75px"><svg viewBox="0 0 24 24"><path d="M14 18V6a2 2 0 0 0-2-2H4a2 2 0 0 0-2 2v11a1 1 0 0 0 1 1h2"/><path d="M15 18H9"/><path d="M19 18h2a1 1 0 0 0 1-1v-3.650a1 1 0 0 0-.220-.624l-3.480-4.350A1 1 0 0 0 17.520 8H14"/><circle cx="17" cy="18" r="2"/><circle cx="7" cy="18" r="2"/></svg><b><span style="letter-spacing:0.87px">Delivery Staff</span></b><p><span style="letter-spacing:0.299px">Manage delivery personnel</span></p></div>
    <div class="st" style="left:30.0px"><div class="tt" style="letter-spacing:0.598px">Total Orders</div><div class="ci"><svg viewBox="0 0 24 24"><circle cx="8" cy="21" r="1"/><circle cx="19" cy="21" r="1"/><path d="M2.050 2.050h2l2.660 12.420a2 2 0 0 0 2 1.580h9.780a2 2 0 0 0 1.950-1.570l1.650-7.430H5.120"/></svg></div><div class="v" style="transform:scaleX(0.9965);transform-origin:0 0;">1,284</div><div class="d"><svg viewBox="0 0 24 24" class="ch" style="stroke:#16a34a"><path d="m18 15-6-6-6 6"/></svg><span class="up" style="transform:scaleX(0.9012);transform-origin:0 0;left:17.500px">12%</span><span style="letter-spacing:0.02px;left:52.700px">Last 30 days</span></div></div>
    <div class="st" style="left:417.75px"><div class="tt" style="letter-spacing:0.909px">Active Customers</div><div class="ci"><svg viewBox="0 0 24 24"><path d="M16 21v-2a4 4 0 0 0-4-4H6a4 4 0 0 0-4 4v2"/><circle cx="9" cy="7" r="4"/><path d="M22 21v-2a4 4 0 0 0-3-3.870"/><path d="M16 3.130a4 4 0 0 1 0 7.750"/></svg></div><div class="v" style="transform:scaleX(1.0657);transform-origin:0 0;">432</div><div class="d"><svg viewBox="0 0 24 24" class="ch" style="stroke:#16a34a"><path d="m18 15-6-6-6 6"/></svg><span class="up" style="transform:scaleX(0.9607);transform-origin:0 0;left:17.500px">5.8%</span><span style="letter-spacing:0.007px;left:59px">From 408 last month</span></div></div>
    <div class="st" style="left:805.5px"><div class="tt" style="letter-spacing:0.628px">Delivery Personnel</div><div class="ci"><svg viewBox="0 0 24 24"><path d="M14 18V6a2 2 0 0 0-2-2H4a2 2 0 0 0-2 2v11a1 1 0 0 0 1 1h2"/><path d="M15 18H9"/><path d="M19 18h2a1 1 0 0 0 1-1v-3.650a1 1 0 0 0-.220-.624l-3.480-4.350A1 1 0 0 0 17.520 8H14"/><circle cx="17" cy="18" r="2"/><circle cx="7" cy="18" r="2"/></svg></div><div class="v" style="transform:scaleX(0.8485);transform-origin:0 0;">18</div><div class="d"><span style="letter-spacing:0.036px;left:0">2 pending approval</span></div></div>
    <div class="st" style="left:1193.25px"><div class="tt" style="letter-spacing:0.304px">Revenue</div><div class="ci"><svg viewBox="0 0 24 24"><line x1="12" x2="12" y1="2" y2="22"/><path d="M17 5H9.500a3.500 3.500 0 0 0 0 7h5a3.500 3.500 0 0 1 0 7H6"/></svg></div><div class="v" style="transform:scaleX(1.0520);transform-origin:0 0;">₹28,459</div><div class="d"><svg viewBox="0 0 24 24" class="ch" style="stroke:#dc2626"><path d="m6 9 6 6 6-6"/></svg><span class="dn" style="transform:scaleX(0.9662);transform-origin:0 0;left:17.500px">2.3%</span><span style="letter-spacing:-0.071px;left:60px">This month</span></div></div>
    <div id="rep"><div class="rt" style="letter-spacing:-0.452px">Daily Requirements Report</div><div class="rs" style="letter-spacing:0.164px;top:95px">Product Requirements</div><div class="rs" style="letter-spacing:0.391px;top:160px">Area-wise Distribution</div><div class="rl"></div><div class="rto" style="letter-spacing:0.102px">Total Orders</div><div class="rbtn"></div></div>
  </div>
  <div id="sbar"><svg viewBox="0 0 14 10" style="position:absolute;left:3px;top:6px;width:13px;height:10px"><path d="M7 1.300 12.300 8.700H1.700z" fill="#8b8b8b" stroke="#8b8b8b" stroke-width="1.600" stroke-linejoin="round"/></svg><div id="thumb"></div><svg viewBox="0 0 14 10" style="position:absolute;left:3px;top:844px;width:13px;height:10px"><path d="M7 8.700 12.300 1.300H1.700z" fill="#8b8b8b" stroke="#8b8b8b" stroke-width="1.600" stroke-linejoin="round"/></svg></div>
  <div class="corner" style="left:0;bottom:0;background:radial-gradient(circle at 100% 0,transparent 9.500px,#1b1b1b 10.500px)"></div>
  <div class="corner" style="right:0;bottom:0;background:radial-gradient(circle at 0 0,transparent 9.500px,#1b1b1b 10.500px)"></div>
</div>
</body>
</html>
